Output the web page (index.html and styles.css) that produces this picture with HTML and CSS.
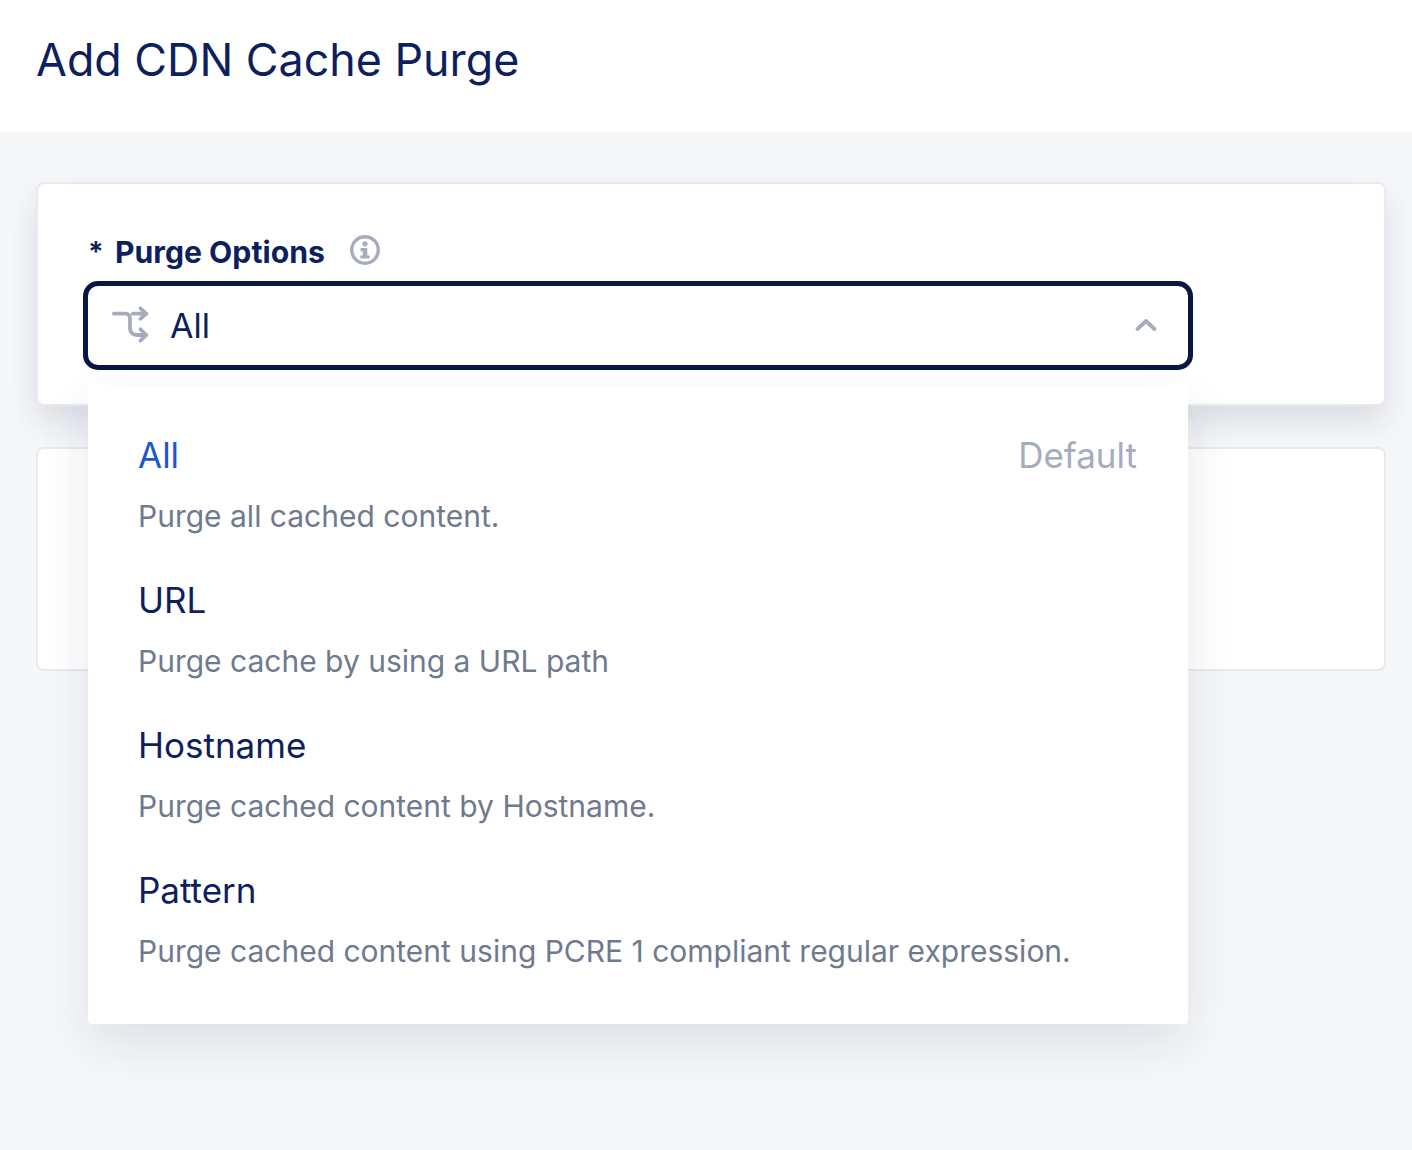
FILE: index.html
```html
<html lang="en">
<head>
    <meta name="viewport" content="width=device-width, initial-scale=1.0">
    <title>Add CDN Cache Purge</title>
    <link rel="stylesheet" href="styles.css">
</head>
<body>
    <div class="pageHeader">
        <h1>Add CDN Cache Purge</h1>
    </div>
    <div class="pageBody">
        <div class="card optionsCard">
            <div class="field">
                <div class="fieldLabel">
                    <span class="required">*</span>
                    <span class="labelText">Purge Options</span>
                    <svg class="infoIcon" viewBox="0 0 32 32" fill="none">
                        <circle cx="16" cy="16" r="13.3" stroke="#a6acbe" stroke-width="3.4"/>
                        <circle cx="16" cy="9.800" r="2.6" fill="#a6acbe"/>
                        <path d="M11.500 14h6.800v7.400h2.400v3.200h-9.400v-3.200h2.400v-4.200h-2.200z" fill="#a6acbe"/>
                    </svg>
                </div>
                <div class="selectBox">
                    <svg class="shuffleIcon" viewBox="0 0 40 40" fill="none" stroke="#a6acbe" stroke-width="4" stroke-linecap="round" stroke-linejoin="round">
                        <path d="M3 8h12c3 0 5 2 5 5.500v10c0 4 3 7 7 7h10"/>
                        <path d="M23 8h14"/>
                        <path d="M31 2.500l6 5.500-6 5.500"/>
                        <path d="M31 24.500l6 6-6 6"/>
                    </svg>
                    <span class="selectValue">All</span>
                    <svg class="chevronIcon" viewBox="0 0 24 14" fill="none" stroke="#a6acbe" stroke-width="3.8" stroke-linecap="round" stroke-linejoin="round">
                        <path d="M3.500 11l8.500-8 8.500 8"/>
                    </svg>
                </div>
                <div class="dropdown">
                    <div class="option">
                        <div class="optionTop">
                            <span class="optionName active">All</span>
                            <span class="optionTag">Default</span>
                        </div>
                        <div class="optionDesc">Purge all cached content.</div>
                    </div>
                    <div class="option">
                        <div class="optionTop"><span class="optionName">URL</span></div>
                        <div class="optionDesc">Purge cache by using a URL path</div>
                    </div>
                    <div class="option">
                        <div class="optionTop"><span class="optionName">Hostname</span></div>
                        <div class="optionDesc">Purge cached content by Hostname.</div>
                    </div>
                    <div class="option">
                        <div class="optionTop"><span class="optionName">Pattern</span></div>
                        <div class="optionDesc">Purge cached content using PCRE 1 compliant regular expression.</div>
                    </div>
                </div>
            </div>
        </div>
        <div class="card emptyCard"></div>
    </div>
</body>
</html>
```

FILE: styles.css
```css
body {
    font-family: Inter, "Liberation Sans", sans-serif;
    background-color: #f6f7f9;
    color: #0e1f5e;
    margin: 0;
    min-height: 1150px;
}
.pageHeader {
    background-color: #fff;
    height: 132px;
    padding: 0 36px;
    display: flex;
    align-items: center;
    box-sizing: border-box;
}
h1 {
    margin: 0 0 13px;
    font-size: 44.8px;
    font-weight: 400;
    line-height: 56px;
}
.pageBody {
    padding: 50px 26px 0 36px;
}
.card {
    background-color: #fff;
    border: 2px solid #e8eaf0;
    border-radius: 8px;
    box-sizing: border-box;
}
.optionsCard {
    height: 224px;
    padding: 47px 45px 0;
    box-shadow: 0 16px 32px rgba(20, 30, 80, 0.12);
}
.emptyCard {
    height: 224px;
    margin-top: 41px;
}
.field {
    position: relative;
    width: 1110px;
}
.fieldLabel {
    display: flex;
    align-items: center;
    height: 42px;
    padding-left: 5px;
    margin-bottom: 8px;
}
.required {
    font-size: 28px;
    font-weight: 700;
    width: 27px;
    line-height: 40px;
}
.labelText {
    font-size: 30.2px;
    font-weight: 700;
}
.infoIcon {
    width: 32px;
    height: 32px;
    margin-left: 24px;
    margin-top: -4px;
}
.selectBox {
    height: 89px;
    border: 5px solid #0a1646;
    border-radius: 15px;
    box-sizing: border-box;
    display: flex;
    align-items: center;
    padding: 0 30px 0 23px;
    background-color: #fff;
}
.shuffleIcon {
    width: 38px;
    height: 38px;
    margin-top: -2px;
}
.selectValue {
    font-size: 34px;
    margin-left: 21px;
    flex: 1;
}
.chevronIcon {
    width: 24px;
    height: 14px;
    margin-top: -2px;
}
.dropdown {
    position: absolute;
    top: 154px;
    left: 5px;
    width: 1100px;
    height: 639px;
    box-sizing: border-box;
    background-color: #fff;
    border-radius: 4px;
    padding: 31px 51px 0 50px;
    box-shadow: 0 20px 50px rgba(20, 30, 80, 0.1);
}
.option {
    height: 145px;
}
.optionTop {
    display: flex;
    justify-content: space-between;
    font-size: 35px;
    line-height: 78px;
    height: 78px;
}
.active {
    color: #1d57c9;
}
.optionTag {
    color: #a6acbe;
}
.optionDesc {
    font-size: 30px;
    line-height: 44px;
    color: #6f7a8f;
}
```
